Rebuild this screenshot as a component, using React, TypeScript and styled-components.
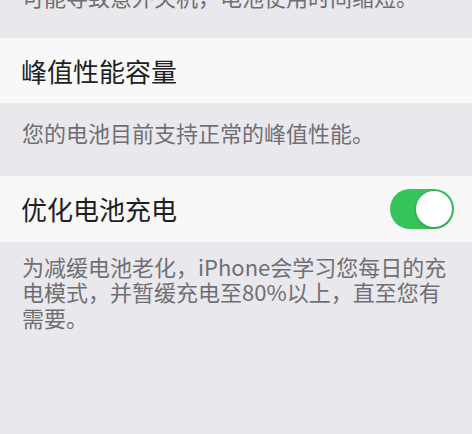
import styled, { createGlobalStyle } from 'styled-components';
import { FC, useState } from 'react';

const GlobalStyle = createGlobalStyle`
  html, body {
    margin: 0;
    padding: 0;
    background-color: #e9e8ec;
  }
  body {
    font-family: "Noto Sans CJK SC", "Noto Sans", sans-serif;
    -webkit-font-smoothing: antialiased;
  }
`;

const Page = styled.div`
  display: flex;
  flex-direction: column;
  width: 472px;
  height: 434px;
  overflow: hidden;
  background-color: #e9e8ec;
`;

// footer text of the section above, scrolled mostly out of view
const ClippedNote = styled.div`
  height: 38px;
  display: flex;
  flex-direction: column;
  justify-content: flex-end;
  overflow: hidden;
  padding-bottom: 29px;
  box-sizing: border-box;
  white-space: nowrap;
`;

const Footer = styled.p<{ $top: number; $bottom: number }>`
  margin: 0;
  padding: ${(p) => p.$top}px 14px ${(p) => p.$bottom}px 22px;
  font-size: 22px;
  line-height: 25.5px;
  color: #6f6f74;
`;

const Cell = styled.div<{ $height: number }>`
  display: flex;
  align-items: center;
  justify-content: space-between;
  height: ${(p) => p.$height}px;
  padding: 0 18px 0 21px;
  background-color: #f8f8f8;
  box-sizing: border-box;
`;

const Title = styled.span`
  font-size: 26px;
  line-height: 30px;
  color: #1f1f21;
`;

const Track = styled.button<{ $on: boolean }>`
  position: relative;
  width: 64px;
  height: 40px;
  padding: 0;
  border: none;
  border-radius: 20px;
  background-color: ${(p) => (p.$on ? '#36c35a' : '#e3e3e6')};
  cursor: pointer;
  margin-top: 1px;
`;

const Knob = styled.span<{ $on: boolean }>`
  position: absolute;
  top: 2px;
  left: ${(p) => (p.$on ? '26px' : '2px')};
  width: 36px;
  height: 36px;
  border-radius: 50%;
  background-color: #ffffff;
  box-shadow: 0 0 0 1px rgba(0, 0, 0, 0.08), 0 2px 3px rgba(0, 0, 0, 0.12);
  transition: left 0.2s ease;
`;

const Toggle: FC<{ initial: boolean }> = ({ initial }) => {
  const [on, setOn] = useState(initial);
  return (
    <Track $on={on} onClick={() => setOn(!on)} aria-pressed={on}>
      <Knob $on={on} />
    </Track>
  );
};

export default function App() {
  return (
    <>
      <GlobalStyle />
      <Page>
        <ClippedNote>
          <Footer $top={0} $bottom={0}>
            可能导致意外关机，电池使用时间缩短。
          </Footer>
        </ClippedNote>
        <Cell $height={65}>
          <Title>峰值性能容量</Title>
        </Cell>
        <Footer $top={17} $bottom={30}>
          您的电池目前支持正常的峰值性能。
        </Footer>
        <Cell $height={66}>
          <Title>优化电池充电</Title>
          <Toggle initial />
        </Cell>
        <Footer $top={12} $bottom={0}>
          为减缓电池老化，iPhone会学习您每日的充电模式，并暂缓充电至80%以上，直至您有需要。
        </Footer>
      </Page>
    </>
  );
}
